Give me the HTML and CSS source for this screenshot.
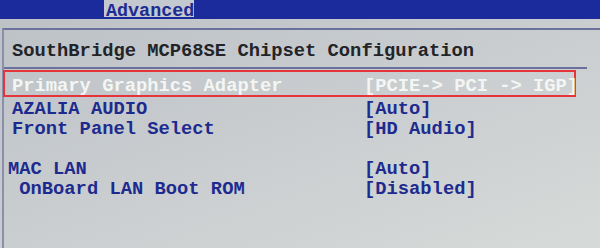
FILE: index.html
```html
<html>
<head><title>BIOS Setup</title>
<link rel="stylesheet" href="styles.css">
</head>
<body>
<div class="topbar">
	<div class="tab">Advanced</div>
</div>
<div class="panel">
	<div class="heading">SouthBridge MCP68SE Chipset Configuration</div>
	<div class="rule"></div>
	<div class="item selected">
		<span class="label">Primary Graphics Adapter</span>
		<span class="value">[PCIE-&gt; PCI -&gt; IGP]</span>
	</div>
	<div class="item">
		<span class="label">AZALIA AUDIO</span>
		<span class="value">[Auto]</span>
	</div>
	<div class="item">
		<span class="label">Front Panel Select</span>
		<span class="value">[HD Audio]</span>
	</div>
	<div class="item blank"></div>
	<div class="item lower">
		<span class="label">MAC LAN</span>
		<span class="value">[Auto]</span>
	</div>
	<div class="item lower">
		<span class="label"> OnBoard LAN Boot ROM</span>
		<span class="value">[Disabled]</span>
	</div>
</div>
</body>
</html>
```

FILE: styles.css
```css
body
{
	margin: 0;
	height: 100%;
	overflow: hidden;
	background: linear-gradient(160deg, #bcc1c6 0%, #c8cccf 45%, #d6dad8 100%);
	font-family: "Liberation Mono", "DejaVu Sans Mono", monospace;
	font-weight: bold;
	font-size: 18.8px;
}
.topbar
{
	height: 19px;
	background: #1c2b9c;
	display: flex;
}
.tab
{
	margin-left: 104px;
	width: 90px;
	height: 17px;
	padding: 3px 0 0 2px;
	line-height: 17px;
	font-size: 18.4px;
	background: #c3c9ce;
	color: #1d2b94;
	box-sizing: border-box;
}
.panel
{
	margin-top: 9px;
	margin-left: 2px;
	border-top: 2px solid #6a729c;
	border-left: 2px solid #8a90ac;
	height: 218px;
}
.heading
{
	padding: 11px 0 0 8px;
	line-height: 20px;
	color: #232428;
}
.rule
{
	margin-top: 6px;
	width: 583px;
	height: 2px;
	background: #6a729c;
	margin-bottom: 1px;
}
.item
{
	display: grid;
	grid-template-columns: 352px auto;
	height: 20px;
	line-height: 20px;
	padding: 2px 0 0 8px;
	box-sizing: border-box;
	color: #1d2b8f;
	white-space: pre;
}
.selected
{
	width: 573px;
	height: 27px;
	margin-left: -1px;
	padding: 4px 0 0 7px;
	border: 2px solid #e5353b;
	color: #f3f6f3;
}
.lower
{
	padding-left: 4px;
	grid-template-columns: 356px auto;
}
```
